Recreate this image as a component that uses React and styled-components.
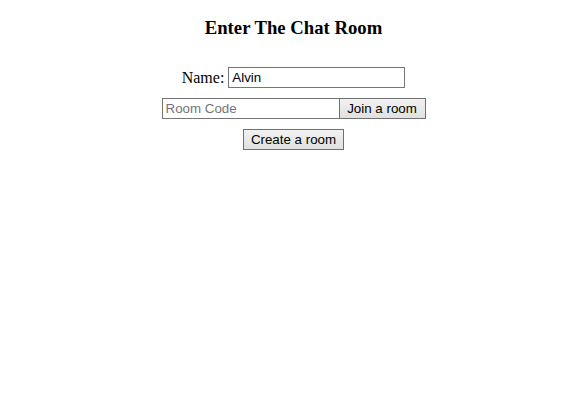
import React from "react";
import styled, { createGlobalStyle } from "styled-components";

const Global = createGlobalStyle`
  html, body { margin: 0; padding: 0; background: #fff; }
  body { font-family: "Liberation Serif", "Times New Roman", serif; color: #000; }
`;

const Page = styled.div`
  display: flex;
  flex-direction: column;
  align-items: center;
  padding: 17px 0 0 25px;
`;

const Title = styled.h3`
  margin: 0 0 28px;
  font-size: 18.72px;
  line-height: 22px;
  font-weight: bold;
  font-family: "Liberation Serif", "Times New Roman", serif;
`;

const Row = styled.div`
  display: flex;
  align-items: center;
  margin-bottom: ${(p) => p.$gap ?? 10}px;
  height: 21px;
`;

const Label = styled.label`
  font-size: 16px;
  margin-right: 4px;
`;

const Input = styled.input`
  box-sizing: border-box;
  width: ${(p) => p.$w}px;
  height: 21px;
  border: 1px solid #767676;
  padding: 1px 3px;
  font-family: "Liberation Sans", Arial, sans-serif;
  font-size: 13.333px;
  color: #000;
  background: #fff;
  outline: none;
  margin: 0;
  &::placeholder { color: #757575; }
`;

const Button = styled.button`
  box-sizing: border-box;
  height: 21px;
  width: ${(p) => p.$w}px;
  border: 1px solid #707070;
  background: linear-gradient(#f2f2f2, #e0e0e0);
  font-family: "Liberation Sans", Arial, sans-serif;
  font-size: 13.333px;
  color: #000;
  padding: 0 6px;
  margin: 0;
  margin-left: ${(p) => p.$ml ?? 0}px;
`;

export default function App() {
  return (
    <>
      <Global />
      <Page>
        <Title>Enter The Chat Room</Title>
        <Row>
          <Label>Name:</Label>
          <Input $w={177} defaultValue="Alvin" />
        </Row>
        <Row>
          <Input $w={178} placeholder="Room Code" />
          <Button $w={87} $ml={-1}>Join a room</Button>
        </Row>
        <Row>
          <Button $w={101}>Create a room</Button>
        </Row>
      </Page>
    </>
  );
}
